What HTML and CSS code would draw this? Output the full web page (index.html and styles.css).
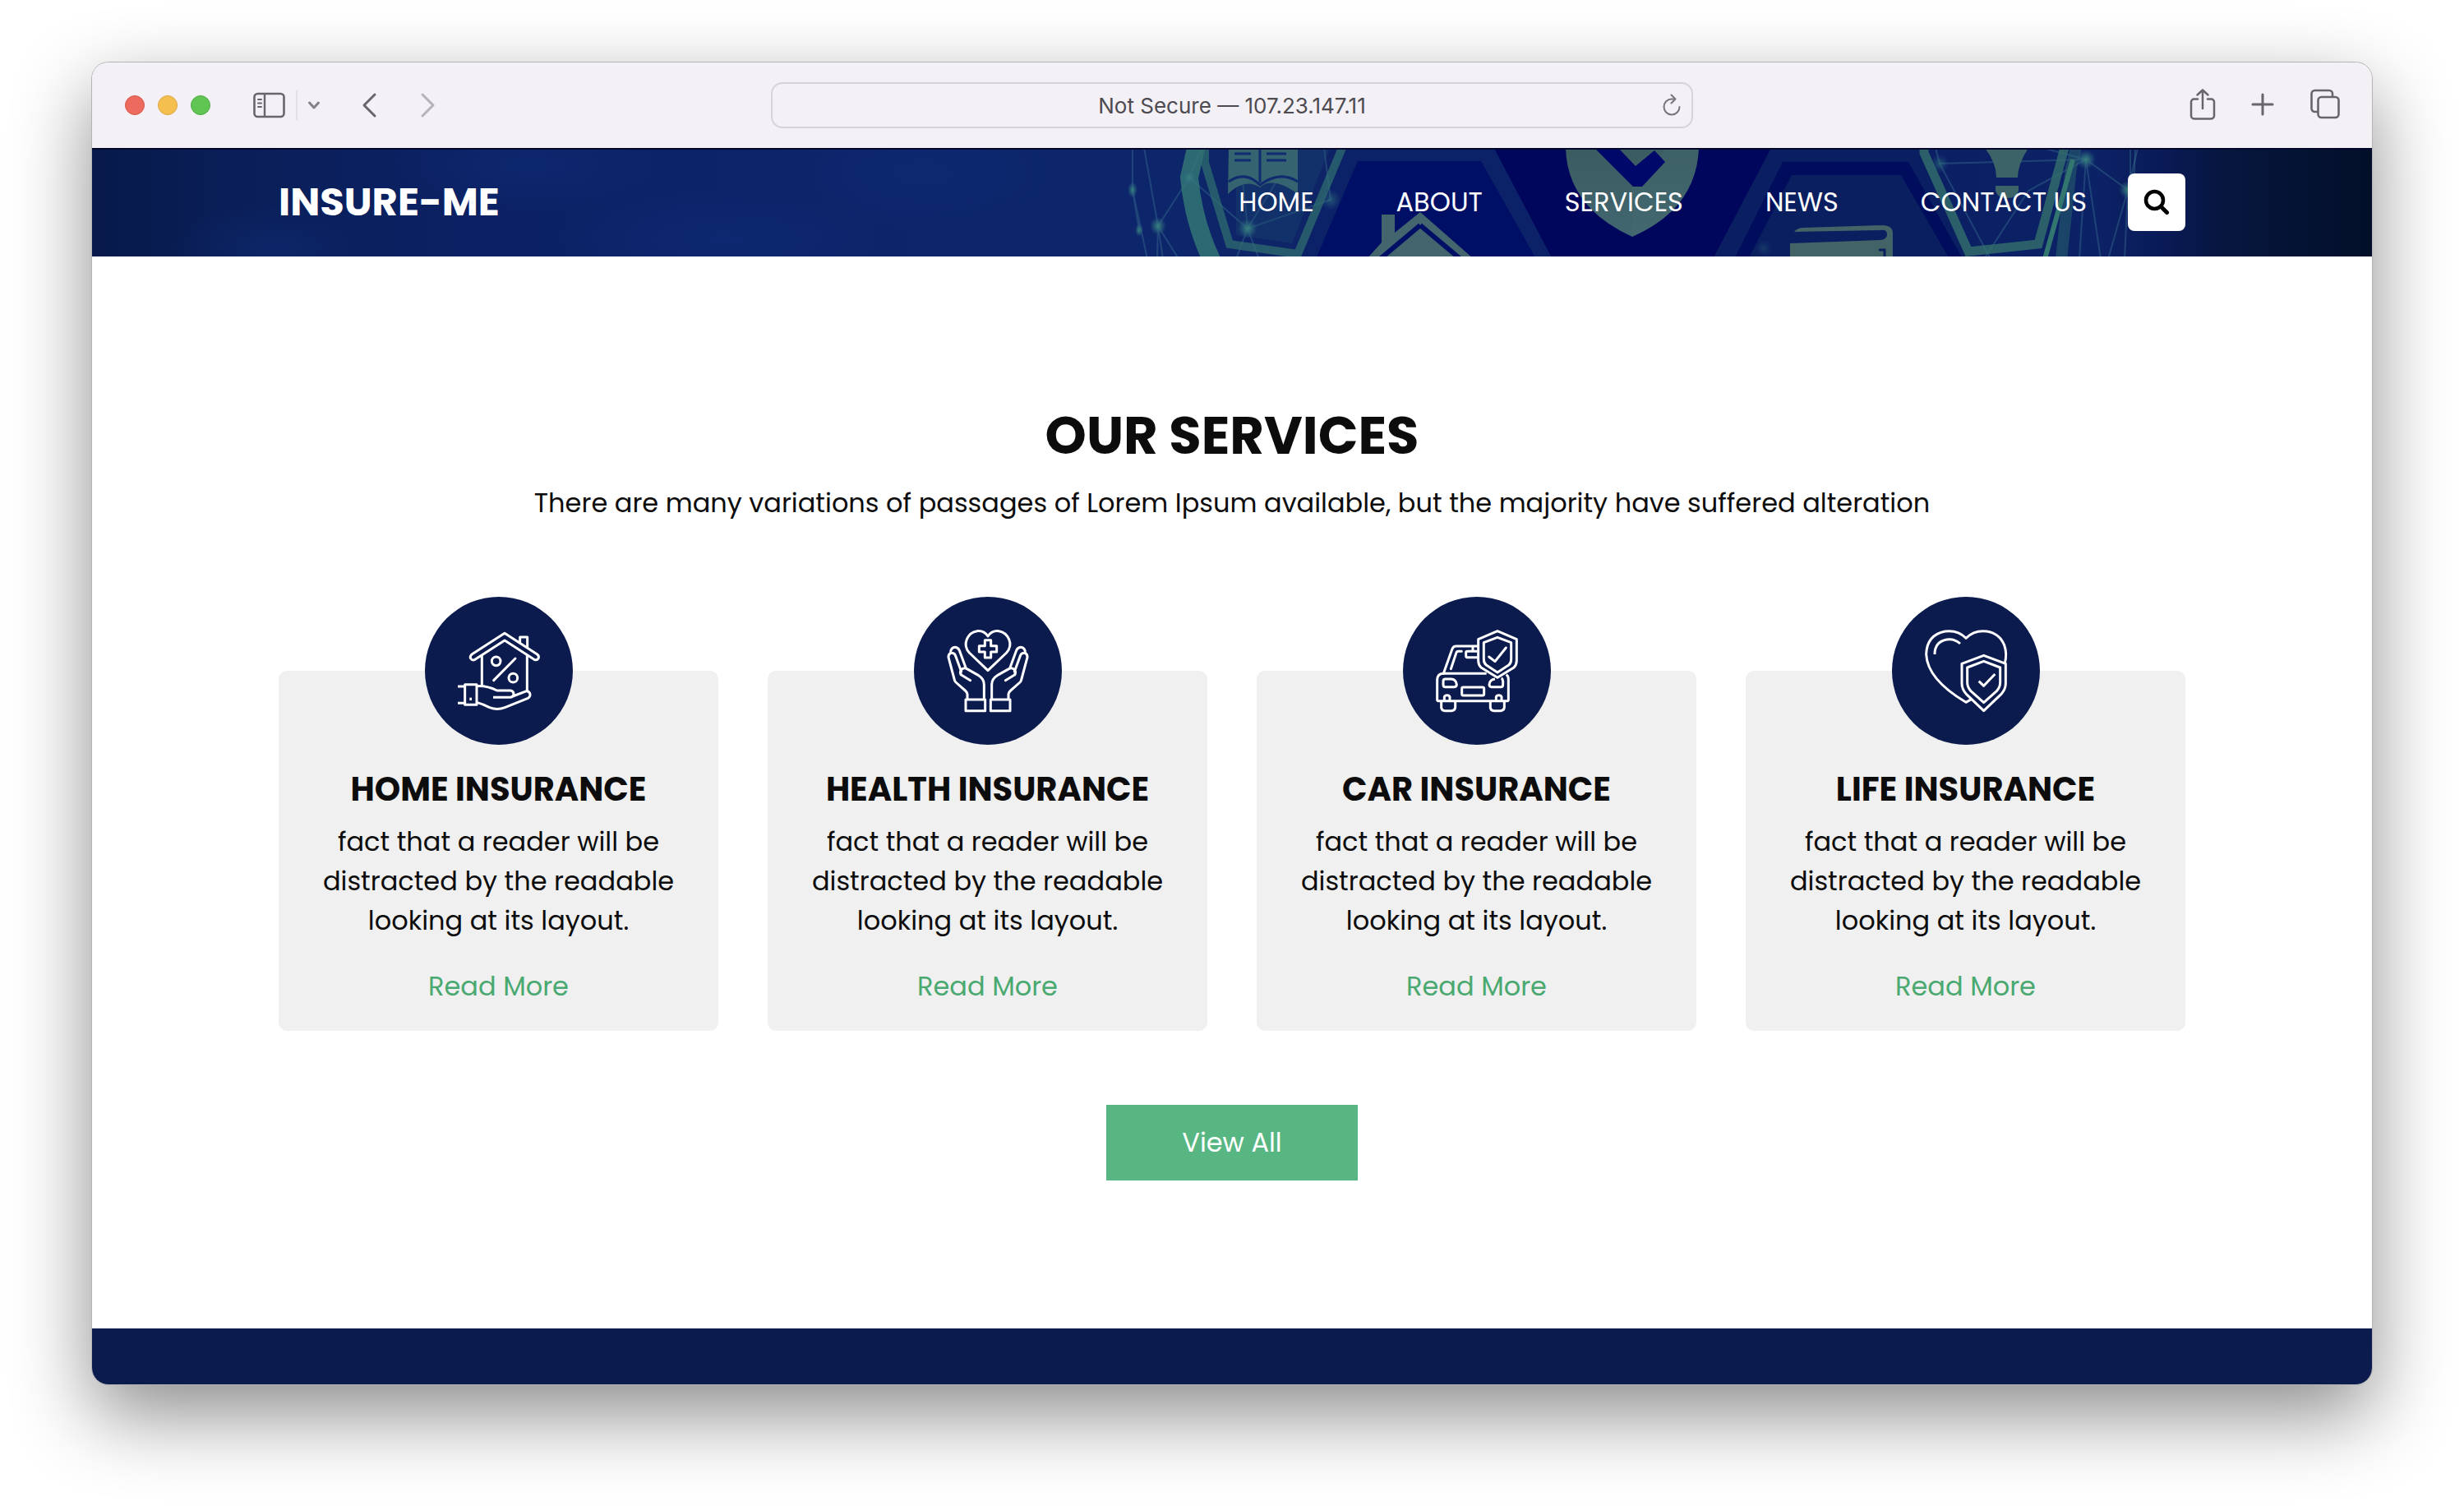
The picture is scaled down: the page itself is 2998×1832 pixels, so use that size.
FILE: index.html
```html
<!DOCTYPE html>
<html lang="en">
<head>
<meta charset="utf-8">
<meta name="viewport" content="width=device-width, initial-scale=1">
<title>Insure-Me</title>
<link rel="stylesheet" href="styles.css">
</head>
<body>
<div class="window">
  <div class="toolbar">
    <div class="toolbar-side">
      <div class="lights"><span class="light red"></span><span class="light yellow"></span><span class="light green"></span></div>
      <button class="tool sidebar-btn" aria-label="Show sidebar">
        <svg width="40" height="32" viewBox="0 0 40 32" fill="none" stroke="currentColor"><rect x="1.5" y="2" width="36" height="28" rx="4" stroke-width="2.6"/><path d="M14 2v28" stroke-width="2.4"/><path d="M6 9h4M6 13.5h4M6 18h4" stroke-width="2" stroke-linecap="round"/></svg>
      </button>
      <span class="divider"></span>
      <button class="tool chevron" aria-label="Tab groups">
        <svg width="16" height="12" viewBox="0 0 16 12" fill="none" stroke="currentColor" stroke-width="3" stroke-linecap="round" stroke-linejoin="round"><path d="M2.5 3l5.500 6 5.500-6"/></svg>
      </button>
      <button class="tool back" aria-label="Back">
        <svg width="20" height="32" viewBox="0 0 20 32" fill="none" stroke="currentColor" stroke-width="3" stroke-linecap="round" stroke-linejoin="round"><path d="M17 3L4 16l13 13"/></svg>
      </button>
      <button class="tool forward" aria-label="Forward" disabled>
        <svg width="20" height="32" viewBox="0 0 20 32" fill="none" stroke="currentColor" stroke-width="3" stroke-linecap="round" stroke-linejoin="round"><path d="M3 3l13 13L3 29"/></svg>
      </button>
    </div>
    <div class="address">
      <input class="address-input" type="text" value="Not Secure — 107.23.147.11" aria-label="Address">
      <button class="tool reload" aria-label="Reload">
        <svg width="24" height="28" viewBox="0 0 24 28" fill="none" stroke="currentColor" stroke-width="2" stroke-linecap="round" stroke-linejoin="round"><path d="M14 6.5H12a9.500 9.500 0 1 0 9.500 9.500"/><path d="M11.500 1.500l5 5-5 5"/></svg>
      </button>
    </div>
    <div class="toolbar-side actions">
      <button class="tool" aria-label="Share">
        <svg width="32" height="40" viewBox="0 0 32 40" fill="none" stroke="currentColor" stroke-width="2.5" stroke-linecap="round" stroke-linejoin="round"><path d="M10 13.500H5.500a3.500 3.500 0 0 0-3.500 3.500v17a3.500 3.500 0 0 0 3.500 3.500h21a3.500 3.500 0 0 0 3.500-3.500V17a3.500 3.500 0 0 0-3.500-3.500H22"/><path d="M16 25V3M9.500 8.500L16 2.500l6.500 6"/></svg>
      </button>
      <button class="tool" aria-label="New tab">
        <svg width="28" height="28" viewBox="0 0 28 28" fill="none" stroke="currentColor" stroke-width="3" stroke-linecap="round"><path d="M14 2v24M2 14h24"/></svg>
      </button>
      <button class="tool" aria-label="Show tabs">
        <svg width="38" height="38" viewBox="0 0 38 38" fill="none" stroke="currentColor" stroke-width="2.6"><path d="M10 28H6.500A4 4 0 0 1 2.500 24V6a4 4 0 0 1 4-4H24a4 4 0 0 1 4 4v3.500"/><rect x="10.500" y="10" width="25" height="25" rx="4"/></svg>
      </button>
    </div>
  </div>

  <header class="site-header">
    <svg class="banner" viewBox="112 180 2774 132" preserveAspectRatio="xMidYMid slice" aria-hidden="true">
      <defs>
        <linearGradient id="sky" x1="0" x2="1" y1="0" y2="0">
          <stop offset="0" stop-color="#07194a"/><stop offset=".06" stop-color="#0a1f58"/><stop offset=".16" stop-color="#0b2163"/><stop offset=".26" stop-color="#0c2369"/><stop offset=".46" stop-color="#0d266b"/><stop offset=".54" stop-color="#0e2466"/><stop offset=".63" stop-color="#00075f"/><stop offset=".72" stop-color="#00055c"/><stop offset=".76" stop-color="#0a1f62"/><stop offset=".88" stop-color="#0c2266"/><stop offset=".91" stop-color="#091a56"/><stop offset=".935" stop-color="#06163e"/><stop offset="1" stop-color="#030f29"/>
        </linearGradient>
        <linearGradient id="metal" x1="0" x2="0" y1="0" y2="1"><stop offset="0" stop-color="#3a5c61"/><stop offset="1" stop-color="#426670"/></linearGradient>
        <radialGradient id="glow"><stop offset="0" stop-color="#37817f"/><stop offset=".4" stop-color="#31727d" stop-opacity=".7"/><stop offset="1" stop-color="#2a6080" stop-opacity="0"/></radialGradient>
        <radialGradient id="patch"><stop offset="0" stop-color="#112f7c" stop-opacity=".4"/><stop offset="1" stop-color="#112f7c" stop-opacity="0"/></radialGradient>
      </defs>
      <rect x="112" y="180" width="2774" height="132" fill="url(#sky)"/>
      <g fill="url(#patch)"><ellipse cx="640" cy="200" rx="170" ry="60"/><ellipse cx="880" cy="290" rx="200" ry="60"/><ellipse cx="1120" cy="210" rx="160" ry="70"/><ellipse cx="330" cy="300" rx="120" ry="50"/></g>
      <!-- home tile -->
      <path d="M1639 180H1818L1889 315H1583z" fill="#0b2168"/>
      <path d="M1652 196H1802L1869 315H1601z" fill="#000f66"/>
      <path d="M1818 180H2155L2084 315H1889z" fill="#00065c"/>
      <!-- card tile -->
      <path d="M2155 180H2342L2400 315H2084z" fill="#0a1e62"/>
      <path d="M2169 197H2322L2388 315H2110z" fill="#000c5c"/>
      <path d="M2180 213H2313L2372 315H2127z" fill="#0a1f60"/>
      <!-- network threads -->
      <g fill="none" stroke="#3b7694" stroke-opacity=".4" stroke-width="2">
        <path d="M1378 180v51l18 84M1392 180l17 95 38-59 15-36M1409 275l-1 40M1409 275l6 40M1409 275l25 40M1378 231l8 49M1447 216l71 62 101-35M1518 278l-14 37M1518 278l14 37M1518 278l-10-98M1619 243l-8-63M1518 278l60-98M2538 194l-70 38-54 83M2538 194l51 37-24 84M2538 194l-8 121M2538 194l18 121M2538 194l-52-14M2589 231l12-51M2589 231l-4 84M2360 199l62 116M2360 199l178-5M2360 199l-5-19"/>
        <path d="M2592 180v60M2598 180l-2 60"/>
      </g>
      <!-- left ring -->
      <path d="M1456 176L1447 216Q1452 270 1475 318" fill="none" stroke="#347a76" stroke-width="22" stroke-opacity=".8"/>
      <path d="M1466 180v18L1496 297L1579 309L1633 180" fill="none" stroke="#31706f" stroke-width="10" stroke-opacity=".7"/>
      <path d="M1504 180L1504 286L1572 296L1618 180z" fill="#1d4c72" fill-opacity=".3"/>
      <!-- book -->
      <path d="M1495 180h84v56q-30-22-46-8q-18-12-39 8z" fill="#366370"/>
      <path d="M1533 180v42M1495 221q20-14 38 4q24-18 46-4" fill="none" stroke="#102b70" stroke-width="3"/>
      <path d="M1502 187h20M1502 195h20M1541 187h24M1541 195h24" stroke="#102b70" stroke-width="3"/>
      <!-- house -->
      <path d="M1681 261h16v22l31-25 65 57h-130l18-20z" fill="#43656d"/>
      <path d="M1728 274l-50 42M1728 274l50 42" fill="none" stroke="#000f66" stroke-width="6"/>
      <!-- shield -->
      <path d="M1905 180q2 72 81 108q78-34 81-108z" fill="url(#metal)"/>
      <path d="M1986 227v61q78-34 81-108h-40z" fill="#466c72" fill-opacity=".3"/>
      <path d="M1940 180h29l21 22 23-19 13 14-28 30h-11z" fill="#00096a"/>
      <!-- bank card -->
      <path d="M2183 282q4-5 12-5l95-3q13 0 13 10v31h-125v-19l110-4q8-1 8-7t-8-5z" fill="#426466"/>
      <path d="M2286 304h7v8" fill="none" stroke="#0a1f60" stroke-width="3"/>
      <!-- right ring and bulb -->
      <path d="M2341 176v10L2395 306L2480 297L2513 176" fill="none" stroke="#33716d" stroke-width="11" stroke-opacity=".8"/>
      <path d="M2526 180L2520 204L2508 315" fill="none" stroke="#2e6e6c" stroke-width="14" stroke-opacity=".45"/>
      <path d="M2522 194L2488 315" stroke="#33756f" stroke-width="6"/>
      <path d="M2415 180h53q-13 20-13 36h-26q0-18-14-36z" fill="#3c6367"/><path d="M2428 226h28v6q-2 9-14 9t-14-9z" fill="#3c6367"/>
      <g fill="url(#glow)"><ellipse cx="1378" cy="231" rx="6" ry="10"/><ellipse cx="1409" cy="275" rx="10" ry="11"/><ellipse cx="1386" cy="280" rx="5" ry="8"/><circle cx="1447" cy="216" r="11"/><circle cx="1518" cy="278" r="12"/><circle cx="1619" cy="243" r="13" opacity=".5"/><circle cx="2538" cy="194" r="12"/><circle cx="2589" cy="231" r="11"/><circle cx="2360" cy="199" r="11" opacity=".5"/><circle cx="2146" cy="302" r="10" opacity=".25"/></g>
      <path d="M112 181h2774" stroke="#01062a" stroke-width="2"/>
    </svg>
    <div class="container header-row">
      <a class="brand" href="#">INSURE-ME</a>
      <nav class="nav" aria-label="Main">
        <a href="#">HOME</a><a href="#">ABOUT</a><a href="#">SERVICES</a><a href="#">NEWS</a><a href="#">CONTACT US</a>
        <button class="search" aria-label="Search">
          <svg width="32" height="32" viewBox="0 0 32 32" fill="none" stroke="currentColor" stroke-linecap="round"><circle cx="13.500" cy="13.500" r="10.500" stroke-width="4.500"/><path d="M22 22l6.500 6.500" stroke-width="5"/></svg>
        </button>
      </nav>
    </div>
  </header>

  <main class="services">
    <div class="container">
      <h1>OUR SERVICES</h1>
      <p class="lead">There are many variations of passages of Lorem Ipsum available, but the majority have suffered alteration</p>
      <div class="cards">
        <article class="card">
          <svg class="card-icon" viewBox="51 48 540 540" fill="none" stroke="#fff" stroke-width="9" stroke-linejoin="round" aria-hidden="true"><circle cx="321" cy="318" r="270" fill="#0c1b4d" stroke="none"/>
            <path d="M342 181L222 258q-8 8-4 15q6 9 16 4L342 207L450 277q10 4 15-4q4-8-4-15z"/><path d="M398 215V195h27v38M259 262v111M424 262v128"/><circle cx="311" cy="283" r="16"/><circle cx="373" cy="344" r="16"/><path d="M381 273l-79 80" stroke-linecap="round"/><path d="M171 375h25M171 436h25"/><rect x="197" y="368" width="43" height="74"/><path d="M214 421h8" stroke-width="10"/><path d="M242 374q35-2 72 16h50q11 2 11 13q-2 12-14 12h-61M242 434q22 6 45 18q28 11 56 0l84-34q11-6 7-18q-6-11-18-6l-44 17"/>
          </svg>
          <h2>HOME INSURANCE</h2><p>fact that a reader will be<br>distracted by the readable<br>looking at its layout.</p><a class="more" href="#">Read More</a>
        </article>
        <article class="card">
          <svg class="card-icon" viewBox="36 48 540 540" fill="none" stroke="#fff" stroke-width="9" stroke-linejoin="round" aria-hidden="true"><circle cx="306" cy="318" r="270" fill="#0c1b4d" stroke="none"/>
            <path d="M306 317L238 252Q218 230 229 203Q240 177 266 173Q292 170 306 192Q320 170 346 173Q372 177 383 203Q394 230 374 252z"/><path d="M295 206h22v21h21v22h-21v21h-22v-21h-21v-22h21z"/>
            <g id="hand"><path d="M231 421v-18q-1-7-8-13l-34-30q-4-4-5-9l-22-82q-1-12 9-16q12-1 16 8l22 60M170 252q0-18 16-20q12 1 16 12l23 62M242 353l-32-19q-9-9-2-19q9-10 20-5l44 25q20 12 20 34v52" stroke-linecap="round"/><rect x="225" y="423" width="71" height="41"/></g>
            <use href="#hand" transform="translate(612 0) scale(-1 1)"/>
          </svg>
          <h2>HEALTH INSURANCE</h2><p>fact that a reader will be<br>distracted by the readable<br>looking at its layout.</p><a class="more" href="#">Read More</a>
        </article>
        <article class="card">
          <svg class="card-icon" viewBox="51 48 540 540" fill="none" stroke="#fff" stroke-width="9" stroke-linejoin="round" aria-hidden="true"><circle cx="321" cy="318" r="270" fill="#0c1b4d" stroke="none"/>
            <path d="M322 228h-77q-10 0-14 10l-32 90M265 247h-12q-6 0-8 7l-19 57" stroke-linecap="round"/><path d="M322 247h-36q-5 0-5 5v13q0 4 5 4h38M306 228v19"/><path d="M356 328H197q-20 2-21 22v74q0 4 4 4h252q4 0 4-4v-76q0-10-8-16"/><path d="M191 428v25q2 11 13 11h25q12-1 13-12v-24M370 428v25q2 11 13 11h25q12-1 13-12v-24M202 426v-13q2-6 10-6q8 0 10 6v13M391 426v-13q2-6 10-6q8 0 10 6v13"/><rect x="266" y="378" width="81" height="30" rx="5"/><path d="M206 348h22q17 2 19 20q0 8-8 9h-33q-8 0-8-9v-12q0-8 8-8zM387 348q-19 2-21 20q0 8 8 9h34q8 0 8-9v-13q-1-8-6-10"/>
            <path d="M396 173l70 30v78q0 14-10 25l-60 37-60-37q-10-11-10-25v-78z"/><path d="M396 196l50 19v61q0 14-9 21l-41 27-41-27q-9-7-9-21v-61z"/><path d="M365 267l22 17 40-50" stroke-linecap="round"/>
          </svg>
          <h2>CAR INSURANCE</h2><p>fact that a reader will be<br>distracted by the readable<br>looking at its layout.</p><a class="more" href="#">Read More</a>
        </article>
        <article class="card">
          <svg class="card-icon" viewBox="36 48 540 540" fill="none" stroke="#fff" stroke-width="9" stroke-linejoin="round" aria-hidden="true"><circle cx="306" cy="318" r="270" fill="#0c1b4d" stroke="none"/>
            <path d="M327 421l-21 12Q165 349 161 258Q163 187 230 174Q277 168 306 199Q337 168 382 174Q428 181 446 224Q457 255 448 291"/><path d="M192 258q0-46 44-54q28-4 49 15"/><path d="M371 262l80 30v72q0 22-17 40l-63 60-63-60q-17-18-17-40v-72z"/><path d="M371 283l60 23v55q0 16-12 30l-48 43-48-43q-12-14-12-30v-55z"/><path d="M353 356l18 17 41-43"/>
          </svg>
          <h2>LIFE INSURANCE</h2><p>fact that a reader will be<br>distracted by the readable<br>looking at its layout.</p><a class="more" href="#">Read More</a>
        </article>
      </div>
      <a class="view-all" href="#">View All</a>
    </div>
  </main>
  <footer class="site-footer"></footer>
</div>
</body>
</html>
```
FILE: styles.css
```css
* { box-sizing: border-box; }
body { margin: 0; padding: 76px 112px 148px; background: #fff; color: #0c0c0c; font-family: "Poppins", "Inter", sans-serif; font-size: 32px; line-height: 48px; }
a { color: inherit; text-decoration: none; }
button { border: 0; padding: 0; background: none; font: inherit; color: inherit; cursor: pointer; }
svg { display: block; }
h1, h2, p { margin: 0; }

.window { border-radius: 20px; overflow: hidden; background: #fff; box-shadow: 0 0 0 1px #b4b4b6, 0 36px 96px rgba(0, 0, 0, .46); }

.toolbar { display: grid; grid-template-columns: 1fr 1122px 1fr; align-items: center; height: 104px; padding: 0 38px; background: #f3f0f6; color: #69656b; }
.toolbar-side { display: flex; align-items: center; padding-left: 2px; }
.lights { display: flex; gap: 16px; margin-right: 52px; }
.light { width: 24px; height: 24px; border-radius: 50%; }
.red { background: #ed6a5e; border: 1px solid #d9564b; }
.yellow { background: #f5bf4f; border: 1px solid #dba53c; }
.green { background: #61c554; border: 1px solid #4dab41; }
.divider { width: 2px; height: 36px; margin: 0 12px; background: #e2dfe5; }
.chevron { color: #85808a; }
.back { margin-left: 49px; }
.forward { margin-left: 52px; color: #b6b2ba; }
.address { display: flex; align-items: center; height: 56px; padding-right: 12px; border: 2px solid #d6d3da; border-radius: 14px; }
.address-input { flex: 1; min-width: 0; padding: 2px 0 0 36px; border: 0; background: none; color: #4d4a50; font: 26px/32px "Inter", sans-serif; text-align: center; }
.reload { color: #77737a; }
.actions { justify-content: flex-end; gap: 43px; padding-bottom: 2px; }

.site-header { display: grid; height: 132px; color: #fff; }
.banner, .header-row { grid-area: 1 / 1; }
.banner { width: 100%; height: 132px; }
.container { width: 100%; max-width: 2320px; margin: 0 auto; }
.header-row { display: flex; align-items: center; justify-content: space-between; }
.brand { font-size: 48px; font-weight: 700; }
.nav { display: flex; align-items: center; gap: 100px; }
.search { display: grid; place-items: center; width: 70px; height: 70px; margin-left: -50px; border-radius: 8px; background: #fff; color: #000; }

.services { padding: 180px 0; text-align: center; }
h1 { font-size: 64px; line-height: 76px; font-weight: 700; }
.lead { margin-top: 20px; }
.cards { display: grid; grid-template-columns: repeat(4, 1fr); gap: 60px; margin-top: 180px; }
.card { display: flex; flex-direction: column; align-items: center; padding: 0 20px 30px; border-radius: 10px; background: #f0f0f0; }
.card-icon { width: 180px; height: 180px; margin-top: -90px; }
h2 { margin: 30px 0 16px; font-size: 40px; line-height: 48px; font-weight: 700; }
.more { margin-top: 32px; color: #4aa970; }
.view-all { display: inline-block; width: 306px; margin-top: 90px; padding: 22px 0; background: #57b681; color: #fff; }
.site-footer { height: 68px; background: #0c1b4d; }
```
